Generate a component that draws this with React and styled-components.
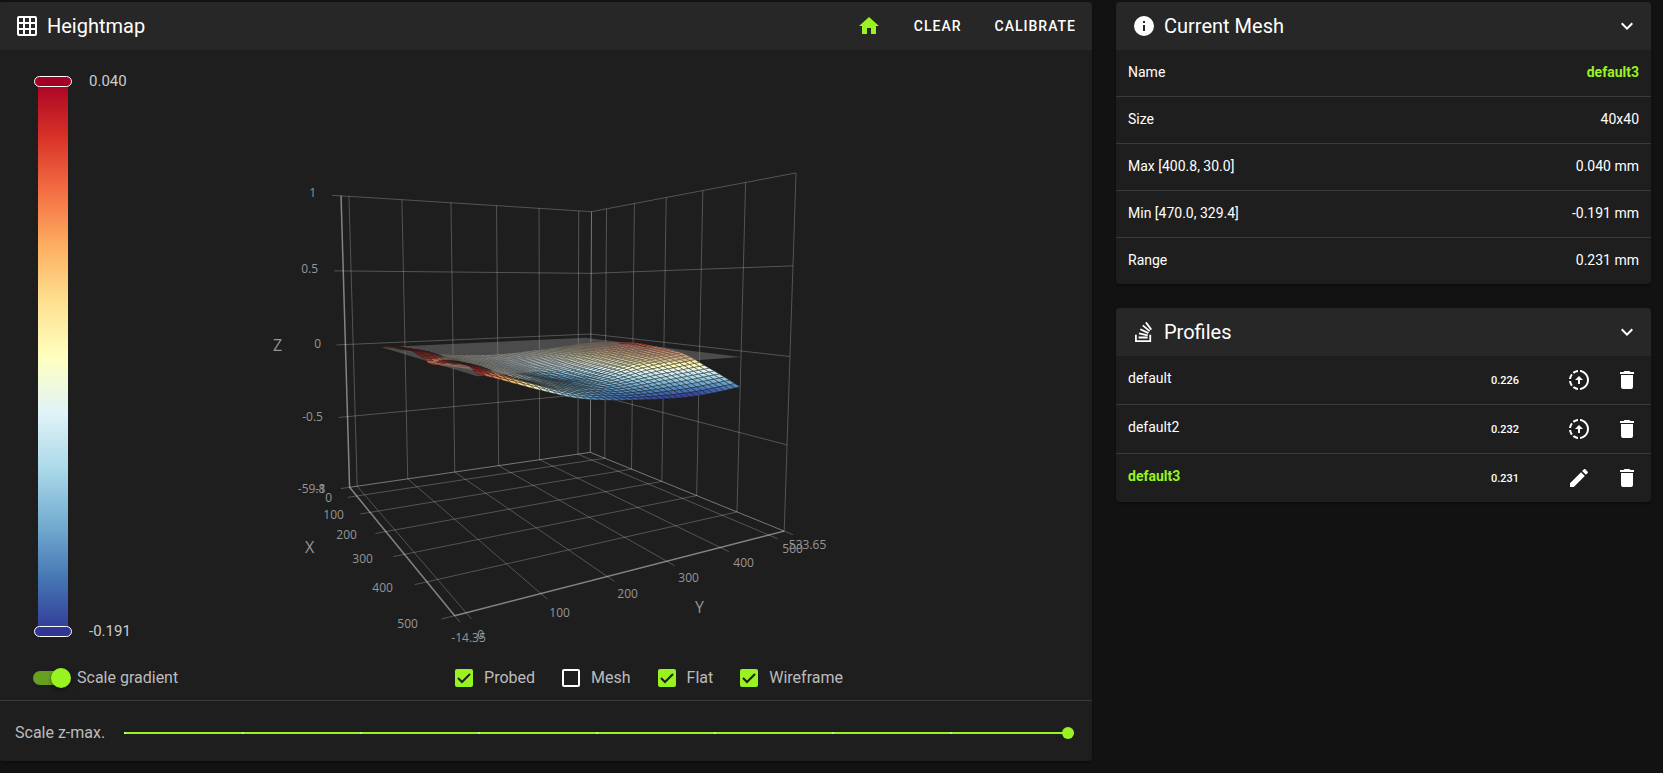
import React from "react";
import styled, { createGlobalStyle } from "styled-components";

const GlobalStyle = createGlobalStyle`
  * {
    box-sizing: border-box;
  }
  body {
    margin: 0;
    background-color: #121212;
    color: #fff;
    font-family: Roboto, "Liberation Sans", sans-serif;
    font-size: 14px;
  }
`;

const Page = styled.main`
  display: grid;
  grid-template-columns: 1093fr 535fr;
  align-items: start;
  gap: 24px;
  margin-left: -1px;
  padding: 2px 12px 12px 0;
`;

const Column = styled.div`
  display: flex;
  flex-direction: column;
  gap: 24px;
  min-width: 0;
`;

const Card = styled.section`
  overflow: hidden;
  border-radius: 4px;
  background-color: #1e1e1e;
  box-shadow: 0 2px 2px rgba(0, 0, 0, 0.3);
`;

const CardHeader = styled.header`
  display: flex;
  align-items: center;
  height: 48px;
  padding: 0 12px 0 16px;
  background-color: #272727;
`;

const Title = styled.h2`
  flex: 1;
  margin: 0 0 0 8px;
  font-size: 20px;
  font-weight: 400;
  line-height: 32px;
`;

const Icon = styled.svg`
  flex: none;
  display: block;
  width: 24px;
  height: 24px;
  fill: currentColor;
`;

const IconButton = styled.button`
  display: flex;
  padding: 0;
  border: 0;
  background: none;
  color: ${(props) => (props.$active ? "#98f321" : "#fff")};
  cursor: pointer;
`;

const TextButton = styled.button`
  padding: 0;
  border: 0;
  background: none;
  color: #fff;
  font-family: inherit;
  font-size: 14px;
  font-weight: 500;
  letter-spacing: 1px;
  text-transform: uppercase;
  cursor: pointer;
`;

const Actions = styled.div`
  display: flex;
  align-items: center;
  gap: 33px;
  padding-right: 4px;
`;

const MapBody = styled.div`
  display: flex;
  height: 595px;
  padding: 24px 0 0 35px;
`;

const Scale = styled.div`
  display: flex;
  gap: 17px;
  height: 566px;
  color: #ccc;
  font-size: 15px;
`;

const ScaleBar = styled.div`
  display: flex;
  flex-direction: column;
  align-items: center;
  justify-content: space-between;
  width: 38px;
  padding: 2px 0 3px;
  background: linear-gradient(
      #a50026,
      #d73027 10%,
      #f46d43 20%,
      #fdae61 30%,
      #fee090 40%,
      #ffffbf 50%,
      #e0f3f8 60%,
      #abd9e9 70%,
      #74add1 80%,
      #4575b4 90%,
      #313695
    )
    center / 30px 556px no-repeat;
`;

const Handle = styled.span`
  width: 38px;
  height: 11px;
  border: 1px solid #fff;
  border-radius: 6px;
  background-color: ${(props) => props.$color};
`;

const ScaleLabels = styled.div`
  display: flex;
  flex-direction: column;
  justify-content: space-between;
  line-height: 14px;
  padding-bottom: 2px;
`;

const Chart = styled.svg`
  flex: 1;
  min-width: 0;
  height: 550px;
  font-family: "Open Sans", "Noto Sans", sans-serif;
`;

const Options = styled.div`
  display: grid;
  grid-template-columns: 173px 1fr;
  align-items: center;
  height: 56px;
  padding: 10px 0 0 34px;
  border-bottom: 1px solid #3a3a3a;
`;

const CheckGroup = styled.div`
  display: flex;
  justify-content: center;
  gap: 27px;
`;

const CheckLabel = styled.label`
  display: flex;
  align-items: center;
  gap: 11px;
  color: #bcbcbc;
  font-size: 16px;
  line-height: 24px;
`;

const Checkbox = styled.input`
  appearance: none;
  width: 18px;
  height: 18px;
  margin: 0;
  border: 2px solid #fff;
  border-radius: 2px;
  &:checked {
    border-color: #98f321;
    background: #98f321
      url("data:image/svg+xml,%3Csvg xmlns='http://www.w3.org/2000/svg' viewBox='0 0 14 14'%3E%3Cpath d='M1 7l4 4 8-8' fill='none' stroke='%231e1e1e' stroke-width='2'/%3E%3C/svg%3E")
      center / 14px 14px;
  }
`;

const SwitchLabel = styled.label`
  display: flex;
  align-items: center;
  gap: 6px;
  color: #bcbcbc;
  font-size: 16px;
`;

const Switch = styled.input`
  appearance: none;
  display: flex;
  align-items: center;
  width: 38px;
  height: 14px;
  margin: 0;
  border-radius: 8px;
  background: linear-gradient(90deg, #679f21 30px, transparent 30px);
  &::before {
    content: "";
    width: 20px;
    height: 20px;
    margin-left: 18px;
    border-radius: 50%;
    background-color: #98f321;
    box-shadow: 0 2px 4px rgba(0, 0, 0, 0.4);
  }
`;

const SliderRow = styled.label`
  display: flex;
  align-items: center;
  gap: 19px;
  height: 60px;
  padding: 3px 18px 0 16px;
  color: #bcbcbc;
  font-size: 16px;
`;

const Slider = styled.input`
  appearance: none;
  flex: 1;
  min-width: 0;
  height: 12px;
  margin: 0;
  background:
    repeating-linear-gradient(90deg, #ccf790 0 2px, transparent 2px 118px) center / 100% 2px no-repeat,
    linear-gradient(#98f321, #98f321) center / 100% 2px no-repeat;
  &::-webkit-slider-thumb {
    appearance: none;
    width: 12px;
    height: 12px;
    border-radius: 50%;
    background-color: #98f321;
  }
`;

const Table = styled.table`
  width: 100%;
  border-spacing: 0;
  font-size: 14px;
`;

const Row = styled.tr`
  height: ${(props) => props.$height}px;
  & > * {
    border-bottom: 1px solid #3a3a3a;
  }
  &:last-child {
    height: ${(props) => props.$height - 1}px;
  }
  &:last-child > * {
    border-bottom: 0;
  }
`;

const NameCell = styled.th`
  padding: 0 12px ${(props) => (props.$raised ? 5 : 2)}px;
  color: ${(props) => (props.$active ? "#98f321" : "#fff")};
  font-weight: ${(props) => (props.$active ? 700 : 400)};
  text-align: left;
`;

const ValueCell = styled.td`
  padding: 0 12px 2px;
  color: ${(props) => (props.$active ? "#98f321" : "#fff")};
  font-weight: ${(props) => (props.$active ? 700 : 400)};
  text-align: right;
`;

const RangeCell = styled.td`
  padding: 0;
  font-size: 11px;
  font-weight: 500;
  text-align: right;
`;

const ActionCell = styled.td`
  width: 132px;
  padding: 0 12px 0 0;
`;

const RowActions = styled.div`
  display: flex;
  justify-content: flex-end;
  gap: 24px;
`;

const paths = {
  grid: "M10,4V8H14V4H10M16,4V8H20V4H16M16,10V14H20V10H16M16,16V20H20V16H16M14,20V16H10V20H14M8,20V16H4V20H8M8,14V10H4V14H8M8,8V4H4V8H8M10,14H14V10H10V14M4,2H20A2,2 0 0,1 22,4V20A2,2 0 0,1 20,22H4C2.92,22 2,21.1 2,20V4A2,2 0 0,1 4,2Z",
  home: "M10,20V14H14V20H19V12H22L12,3L2,12H5V20H10Z",
  info: "M13,9H11V7H13M13,17H11V11H13M12,2A10,10 0 0,0 2,12A10,10 0 0,0 12,22A10,10 0 0,0 22,12A10,10 0 0,0 12,2Z",
  chevron: "M7.41,8.58L12,13.17L16.59,8.58L18,10L12,16L6,10L7.41,8.58Z",
  stack: "M17.36,20.2V14.82H19.15V22H3V14.82H4.8V20.2H17.36M6.77,14.32L7.14,12.56L15.93,14.41L15.56,16.17L6.77,14.32M7.93,10.11L8.69,8.5L16.83,12.28L16.07,13.9L7.93,10.11M10.19,6.12L11.34,4.74L18.24,10.5L17.09,11.87L10.19,6.12M14.64,1.87L20,9.08L18.56,10.15L13.2,2.94L14.64,1.87M6.59,18.41V16.61H15.57V18.41H6.59Z",
  load: "M13,2.03V2.05L13,4.05C17.39,4.59 20.5,8.58 19.96,12.97C19.5,16.61 16.64,19.5 13,19.93V21.93C18.5,21.38 22.5,16.5 21.95,11C21.5,6.25 17.73,2.5 13,2.03M11,2.06C9.05,2.25 7.19,3 5.67,4.26L7.1,5.74C8.22,4.84 9.57,4.26 11,4.06V2.06M4.26,5.67C3,7.19 2.25,9.04 2.05,11H4.05C4.24,9.58 4.8,8.23 5.69,7.1L4.26,5.67M2.06,13C2.26,14.96 3.03,16.81 4.27,18.33L5.69,16.9C4.81,15.77 4.24,14.42 4.06,13H2.06M7.1,18.37L5.67,19.74C7.18,21 9.04,21.79 11,22V20C9.58,19.82 8.23,19.25 7.1,18.37M12,8L8,12H11V16H13V12H16L12,8Z",
  trash: "M19,4H15.5L14.5,3H9.5L8.5,4H5V6H19M6,19A2,2 0 0,0 8,21H16A2,2 0 0,0 18,19V7H6V19Z",
  pencil: "M20.71,7.04C21.1,6.65 21.1,6 20.71,5.63L18.37,3.29C18,2.9 17.35,2.9 16.96,3.29L15.12,5.12L18.87,8.87M3,17.25V21H6.75L17.81,9.93L14.06,6.18L3,17.25Z",
};

const MdIcon = ({ name }) => (
  <Icon viewBox="0 0 24 24" aria-hidden="true">
    <path d={paths[name]} />
  </Icon>
);

/* perspective: homogeneous vectors for the box origin and its x, y, z sides */
const ORIGIN = [350, 487.3, 1];
const SIDE_X = [-73.4, -113.1, -0.3922];
const SIDE_Y = [363.8, 59.3, 0.2084];
const SIDE_Z = [-22.2, -299.3, -0.04];

const project = (u, v, z) => {
  const w = (z + 1) / 2;
  const [x, y, d] = ORIGIN.map((o, i) => o + u * SIDE_X[i] + v * SIDE_Y[i] + w * SIDE_Z[i]);
  return [x / d, y / d];
};

const toU = (x) => (x + 59.8) / 559.8;
const toV = (y) => (y + 14.35) / 548;

/* probed heights, one row per u knot */
const knotsU = [0.16, 0.3, 0.45, 0.58, 0.64, 0.72, 0.82, 0.9, 0.946];
const knotsV = [0.081, 0.14, 0.22, 0.35, 0.5, 0.7, 0.87];
const heights = [
  [0.01, -0.02, -0.05, -0.08, -0.09, -0.07, -0.04],
  [0.03, -0.01, -0.05, -0.085, -0.1, -0.06, -0.015],
  [0.035, 0.015, -0.045, -0.09, -0.12, -0.05, 0.008],
  [0.01, -0.005, -0.05, -0.1, -0.145, -0.05, 0.001],
  [-0.01, -0.03, -0.06, -0.105, -0.15, -0.055, -0.006],
  [0.025, -0.01, -0.065, -0.115, -0.145, -0.07, -0.025],
  [0.04, 0.01, -0.055, -0.12, -0.15, -0.115, -0.085],
  [0.035, -0.005, -0.055, -0.13, -0.165, -0.16, -0.135],
  [0.01, -0.025, -0.075, -0.145, -0.176, -0.191, -0.165],
];

const spline = (knots, values, t) => {
  let i = 0;
  while (i < knots.length - 2 && t > knots[i + 1]) i++;
  const slope = (k) => {
    const a = Math.max(k - 1, 0);
    const b = Math.min(k + 1, knots.length - 1);
    return (values[b] - values[a]) / (knots[b] - knots[a]);
  };
  const h = knots[i + 1] - knots[i];
  const s = (t - knots[i]) / h;
  const s2 = s * s;
  const s3 = s2 * s;
  return (
    (2 * s3 - 3 * s2 + 1) * values[i] +
    (s3 - 2 * s2 + s) * h * slope(i) +
    (3 * s2 - 2 * s3) * values[i + 1] +
    (s3 - s2) * h * slope(i + 1)
  );
};

const heightAt = (u, v) =>
  spline(knotsU, heights.map((row) => spline(knotsV, row, v)), u);

const gradient = [
  [165, 0, 38], [215, 48, 39], [244, 109, 67], [253, 174, 97], [254, 224, 144], [255, 255, 191],
  [224, 243, 248], [171, 217, 233], [116, 173, 209], [69, 117, 180], [49, 54, 149],
];

const colorAt = (z, light) => {
  const t = Math.min(Math.max((0.04 - z) / 0.231, 0), 0.999) * 10;
  const i = Math.floor(t);
  const rgb = gradient[i].map((c, k) => Math.round((c + (gradient[i + 1][k] - c) * (t - i)) * light));
  return `rgb(${rgb.join(",")})`;
};

const points = (list) => list.map(([x, y]) => `${x.toFixed(1)},${y.toFixed(1)}`).join(" ");

const N = 39;
const cells = [];
for (let i = 0; i < N; i++) {
  for (let j = N - 1; j >= 0; j--) {
    const u = (k) => 0.16 + (0.786 * k) / N;
    const v = (k) => 0.081 + (0.789 * k) / N;
    const corners = [[i, j], [i + 1, j], [i + 1, j + 1], [i, j + 1]].map(([a, b]) => {
      const z = heightAt(u(a), v(b));
      return { z, p: project(u(a), v(b), z) };
    });
    const z = corners.reduce((sum, c) => sum + c.z, 0) / 4;
    const light = j < 7 && z > 0 ? 0.7 : 1;
    cells.push({ id: `${i}-${j}`, z, points: points(corners.map((c) => c.p)), fill: colorAt(z, light) });
  }
}

const plane = points([[0.16, 0.081], [0.946, 0.081], [0.946, 0.87], [0.16, 0.87]].map(([u, v]) => project(u, v, 0)));

const ticksX = [0, 100, 200, 300, 400].map(toU);
const ticksY = [0, 100, 200, 300, 400, 500].map(toV);

const segment = (a, b) => [...project(...a), ...project(...b)];

const gridLines = [
  ...ticksX.flatMap((u) => [segment([u, -0.03, -1], [u, 1, -1]), segment([u, 1, -1], [u, 1, 1])]),
  ...ticksY.flatMap((v) => [segment([0, v, -1], [1.03, v, -1]), segment([0, v, -1], [0, v, 1])]),
  ...[-0.5, 0, 0.5, 1].flatMap((z) => [segment([0, -0.03, z], [0, 1, z]), segment([0, 1, z], [1, 1, z])]),
  segment([0, -0.03, -1], [0, 0, -1]),
  segment([1, -0.03, -1], [1, 0, -1]),
  segment([1, 0, -1], [1.03, 0, -1]),
  segment([1, 1, -1], [1.03, 1, -1]),
  segment([1, 1, -1], [1, 1, 1]),
];

const edges = [segment([0, 1, -1], [0, 1, 1]), segment([0, 0, -1], [0, 1, -1]), segment([0, 1, -1], [1, 1, -1])];
const axes = [segment([0, 0, -1], [0, 0, 1]), segment([0, 0, -1], [1, 0, -1]), segment([1, 0, -1], [1, 1, -1])];

const labels = [
  [313, 197, "1"], [310, 273, "0.5"], [318, 348, "0"], [313, 421, "-0.5"], [312, 493, "-59.8"], [321, 493, "-1"],
  [329, 502, "0"], [334, 519, "100"], [347, 539, "200"], [363, 563, "300"], [383, 592, "400"], [408, 628, "500"],
  [469, 642, "-14.35"], [481, 639, "0"], [560, 617, "100"], [628, 598, "200"], [689, 582, "300"], [744, 567, "400"],
  [793, 553, "500"], [808, 549, "533.65"],
];

const names = [[278, 351, "Z"], [310, 553, "X"], [700, 613, "Y"]];

const Lines = ({ items, opacity, width }) => (
  <g stroke="#fff" strokeOpacity={opacity} strokeWidth={width}>
    {items.map((l, i) => (
      <line key={i} x1={l[0]} y1={l[1]} x2={l[2]} y2={l[3]} />
    ))}
  </g>
);

const Surface = ({ items }) => (
  <g stroke="#1c1c1c" strokeOpacity="0.56" strokeWidth="0.7">
    {items.map((cell) => (
      <polygon key={cell.id} points={cell.points} fill={cell.fill} />
    ))}
  </g>
);

const HeightmapChart = () => (
  <Chart viewBox="134 74 956 550" preserveAspectRatio="xMidYMid meet" overflow="visible" role="img" aria-label="Heightmap">
    <Lines items={gridLines} opacity={0.24} width={1} />
    <Lines items={edges} opacity={0.4} width={1} />
    <Surface items={cells.filter((cell) => cell.z < 0)} />
    <polygon points={plane} fill="#8a8a8a" fillOpacity="0.42" />
    <Surface items={cells.filter((cell) => cell.z >= 0)} />
    <Lines items={axes} opacity={0.45} width={1.5} />
    <g fill="#969696" fontSize="12" textAnchor="middle">
      {labels.map(([x, y, text]) => (
        <text key={text + x} x={x} y={y}>{text}</text>
      ))}
    </g>
    <g fill="#969696" fontSize="16" textAnchor="middle">
      {names.map(([x, y, text]) => (
        <text key={text} x={x} y={y}>{text}</text>
      ))}
    </g>
  </Chart>
);

const meshInfo = [
  ["Name", "default3"],
  ["Size", "40x40"],
  ["Max [400.8, 30.0]", "0.040 mm"],
  ["Min [470.0, 329.4]", "-0.191 mm"],
  ["Range", "0.231 mm"],
];

const profiles = [
  { name: "default", range: "0.226" },
  { name: "default2", range: "0.232" },
  { name: "default3", range: "0.231", active: true },
];

const options = [
  ["Probed", true],
  ["Mesh", false],
  ["Flat", true],
  ["Wireframe", true],
];

const Heightmap = () => (
  <Card>
    <CardHeader>
      <MdIcon name="grid" />
      <Title>Heightmap</Title>
      <Actions>
        <IconButton $active aria-label="Home">
          <MdIcon name="home" />
        </IconButton>
        <TextButton>Clear</TextButton>
        <TextButton>Calibrate</TextButton>
      </Actions>
    </CardHeader>
    <MapBody>
      <Scale>
        <ScaleBar>
          <Handle $color="#a50026" />
          <Handle $color="#313695" />
        </ScaleBar>
        <ScaleLabels>
          <span>0.040</span>
          <span>-0.191</span>
        </ScaleLabels>
      </Scale>
      <HeightmapChart />
    </MapBody>
    <Options>
      <SwitchLabel>
        <Switch type="checkbox" role="switch" defaultChecked />
        Scale gradient
      </SwitchLabel>
      <CheckGroup>
        {options.map(([label, checked]) => (
          <CheckLabel key={label}>
            <Checkbox type="checkbox" defaultChecked={checked} />
            {label}
          </CheckLabel>
        ))}
      </CheckGroup>
    </Options>
    <SliderRow>
      Scale z-max.
      <Slider type="range" min="0" max="8" defaultValue="8" />
    </SliderRow>
  </Card>
);

const CurrentMesh = () => (
  <Card>
    <CardHeader>
      <MdIcon name="info" />
      <Title>Current Mesh</Title>
      <IconButton aria-label="Collapse current mesh">
        <MdIcon name="chevron" />
      </IconButton>
    </CardHeader>
    <Table>
      <tbody>
        {meshInfo.map(([label, value]) => (
          <Row key={label} $height={47}>
            <NameCell scope="row">{label}</NameCell>
            <ValueCell $active={label === "Name"}>{value}</ValueCell>
          </Row>
        ))}
      </tbody>
    </Table>
  </Card>
);

const Profiles = () => (
  <Card>
    <CardHeader>
      <MdIcon name="stack" />
      <Title>Profiles</Title>
      <IconButton aria-label="Collapse profiles">
        <MdIcon name="chevron" />
      </IconButton>
    </CardHeader>
    <Table>
      <tbody>
        {profiles.map(({ name, range, active }) => (
          <Row key={name} $height={49}>
            <NameCell scope="row" $raised $active={active}>{name}</NameCell>
            <RangeCell>{range}</RangeCell>
            <ActionCell>
              <RowActions>
                <IconButton aria-label={active ? `Rename ${name}` : `Load ${name}`}>
                  <MdIcon name={active ? "pencil" : "load"} />
                </IconButton>
                <IconButton aria-label={`Delete ${name}`}>
                  <MdIcon name="trash" />
                </IconButton>
              </RowActions>
            </ActionCell>
          </Row>
        ))}
      </tbody>
    </Table>
  </Card>
);

const App = () => (
  <>
    <GlobalStyle />
    <Page>
      <Heightmap />
      <Column>
        <CurrentMesh />
        <Profiles />
      </Column>
    </Page>
  </>
);

export default App;
